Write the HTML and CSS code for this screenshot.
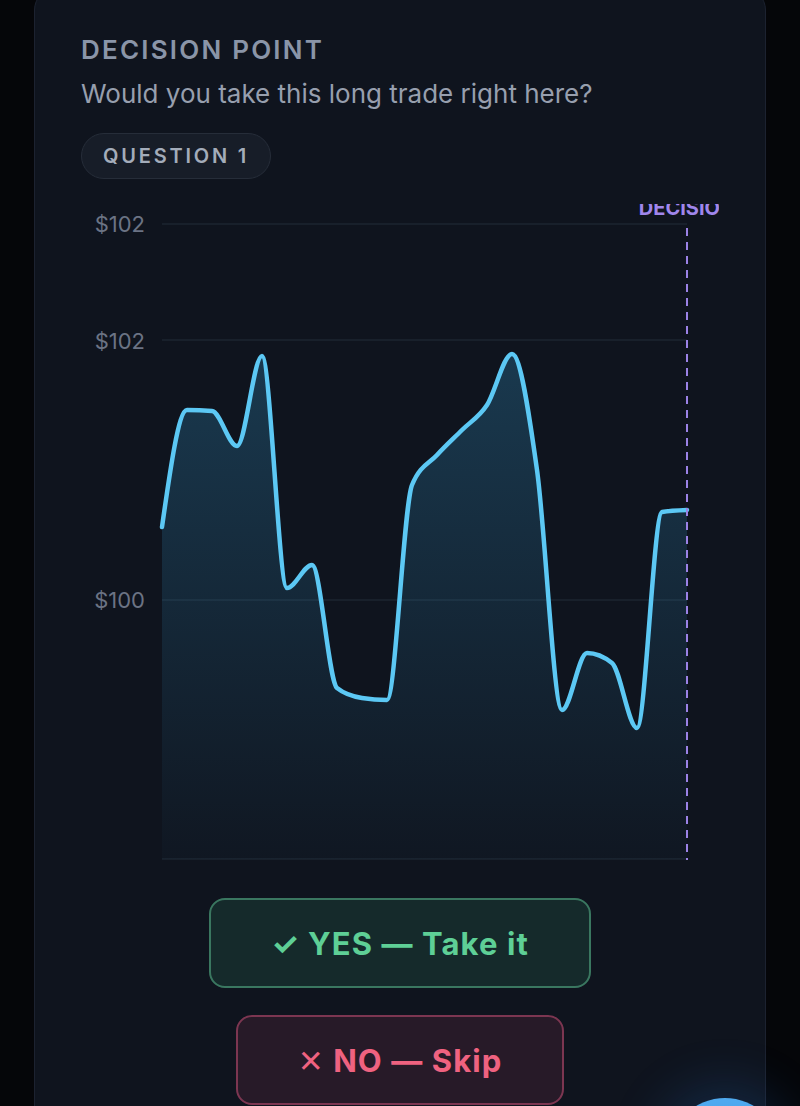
FILE: index.html
```html
<!DOCTYPE html>
<html lang="en">
<head>
<meta charset="utf-8">
<title>Decision Point</title>
<link rel="stylesheet" href="styles.css">
</head>
<body>
<main class="card">
  <h2 class="eyebrow">DECISION POINT</h2>
  <p class="prompt">Would you take this long trade right here?</p>
  <span class="pill">QUESTION 1</span>
  <div class="chart">
    <svg id="chart" width="638" height="660" viewBox="0 0 638 660">
      <defs>
        <linearGradient id="areaFill" gradientUnits="userSpaceOnUse" x1="0" y1="150" x2="0" y2="655">
          <stop offset="0" stop-color="#3aaee8" stop-opacity="0.24"/>
          <stop offset="1" stop-color="#3aaee8" stop-opacity="0.02"/>
        </linearGradient>
      </defs>
      <g class="grid">
        <line x1="81" y1="20" x2="606" y2="20"/>
        <line x1="81" y1="136" x2="606" y2="136"/>
        <line x1="81" y1="396" x2="606" y2="396"/>
        <line x1="81" y1="655" x2="606" y2="655"/>
      </g>
      <g class="ylabels">
        <text x="64" y="28" text-anchor="end">$102</text>
        <text x="64" y="145" text-anchor="end">$102</text>
        <text x="64" y="404" text-anchor="end">$100</text>
      </g>
      <path id="area" class="area" d=""/>
      <path id="line" class="line" d=""/>
      <line class="decision" x1="606" y1="24" x2="606" y2="656"/>
      <text class="decision-label" x="606" y="11" text-anchor="middle">DECISION</text>
    </svg>
  </div>
  <div class="actions">
    <button class="btn yes">✓ YES — Take it</button>
    <button class="btn no">✕ NO — Skip</button>
  </div>
</main>
<button class="fab" aria-label="Open"></button>
<script src="script.js"></script>
</body>
</html>
```

FILE: styles.css
```css
* { box-sizing: border-box; }
html, body { margin: 0; padding: 0; }
body {
  background: #050609;
  font-family: Inter, "Noto Sans", "Liberation Sans", sans-serif;
  overflow: hidden;
  height: 1106px;
}
.card {
  margin: -12px 34px 0;
  background: #0f141e;
  border: 1px solid #1c2230;
  border-radius: 22px;
  padding: 45px 46px 40px;
  display: flex;
  flex-direction: column;
  align-items: flex-start;
  min-height: 1200px;
}
.eyebrow {
  margin: 0;
  font-size: 26px;
  line-height: 32px;
  font-weight: 600;
  letter-spacing: 0.085em;
  color: #8a95a8;
}
.prompt {
  margin: 12px 0 0;
  font-size: 26px;
  line-height: 32px;
  font-weight: 400;
  color: #979fae;
}
.pill {
  margin-top: 23px;
  display: inline-flex;
  align-items: center;
  height: 46px;
  padding: 0 21px;
  border-radius: 23px;
  background: #171d28;
  border: 1px solid #262d39;
  color: #a3acba;
  font-size: 20px;
  font-weight: 600;
  letter-spacing: 0.14em;
}
.chart {
  margin-top: 25px;
  align-self: stretch;
  height: 660px;
}
.chart svg { display: block; overflow: hidden; }
.grid line { stroke: #1d2431; stroke-width: 1.5; }
.ylabels text {
  fill: #6b7384;
  font-size: 22px;
  font-family: Inter, "Noto Sans", sans-serif;
}
.area { fill: url(#areaFill); }
.line {
  fill: none;
  stroke: #5cc8f4;
  stroke-width: 4.5;
  stroke-linejoin: round;
  stroke-linecap: round;
}
.decision {
  stroke: #9b82e6;
  stroke-width: 2;
  stroke-dasharray: 8 6;
}
.decision-label {
  fill: #a086ec;
  font-size: 20px;
  font-weight: 700;
  font-family: Inter, "Noto Sans", sans-serif;
}
.actions {
  align-self: stretch;
  margin-top: 34px;
  display: flex;
  flex-direction: column;
  align-items: center;
  gap: 27px;
}
.btn {
  height: 90px;
  padding: 0 60px;
  border-radius: 16px;
  font-family: Inter, "Noto Sans", "DejaVu Sans", sans-serif;
  font-size: 31px;
  font-weight: 700;
  letter-spacing: 0.035em;
  cursor: pointer;
}
.btn.yes {
  background: #152a2b;
  border: 2px solid #3a7760;
  color: #5ecf96;
}
.btn.no {
  background: #271a28;
  border: 2px solid #7c3651;
  color: #ef6280;
}
.fab {
  position: fixed;
  right: 19px;
  bottom: -104px;
  width: 112px;
  height: 112px;
  border-radius: 50%;
  border: none;
  background: linear-gradient(180deg, #4faaf0, #3a8de0);
  box-shadow: 0 0 50px 14px rgba(40, 120, 220, 0.18);
}
```

FILE: script.js
```js
(function () {
  var raw = [
    [162,527],[187,410],[212,411],[237,446],[262,356],[287,588],[312,565],
    [337,688],[362,698],[387,700],[412,485],[437,455],[462,430],[487,405],
    [512,354],[537,470],[562,710],[587,653],[612,663],[637,728],[662,512],[687,510]
  ];
  var p = raw.map(function (a) { return [a[0] - 81, a[1] - 204]; });
  function sign(x) { return x < 0 ? -1 : 1; }
  function slope3(a, b, c) {
    var h0 = b[0] - a[0], h1 = c[0] - b[0];
    var s0 = (b[1] - a[1]) / h0, s1 = (c[1] - b[1]) / h1;
    var q = (s0 * h1 + s1 * h0) / (h0 + h1);
    return (sign(s0) + sign(s1)) * Math.min(Math.abs(s0), Math.abs(s1), 0.5 * Math.abs(q)) || 0;
  }
  function slope2(a, b, t) {
    var h = b[0] - a[0];
    return h ? (3 * (b[1] - a[1]) / h - t) / 2 : t;
  }
  var n = p.length, t = new Array(n);
  for (var i = 1; i < n - 1; i++) t[i] = slope3(p[i - 1], p[i], p[i + 1]);
  t[0] = slope2(p[0], p[1], t[1]);
  t[n - 1] = slope2(p[n - 2], p[n - 1], t[n - 2]);
  var d = "M" + p[0][0] + "," + p[0][1];
  for (var k = 0; k < n - 1; k++) {
    var a = p[k], b = p[k + 1], dx = (b[0] - a[0]) / 3;
    d += "C" + (a[0] + dx) + "," + (a[1] + dx * t[k]) + "," + (b[0] - dx) + "," + (b[1] - dx * t[k + 1]) + "," + b[0] + "," + b[1];
  }
  document.getElementById("line").setAttribute("d", d);
  document.getElementById("area").setAttribute("d", d + "L" + p[n - 1][0] + ",655L" + p[0][0] + ",655Z");
})();
```
